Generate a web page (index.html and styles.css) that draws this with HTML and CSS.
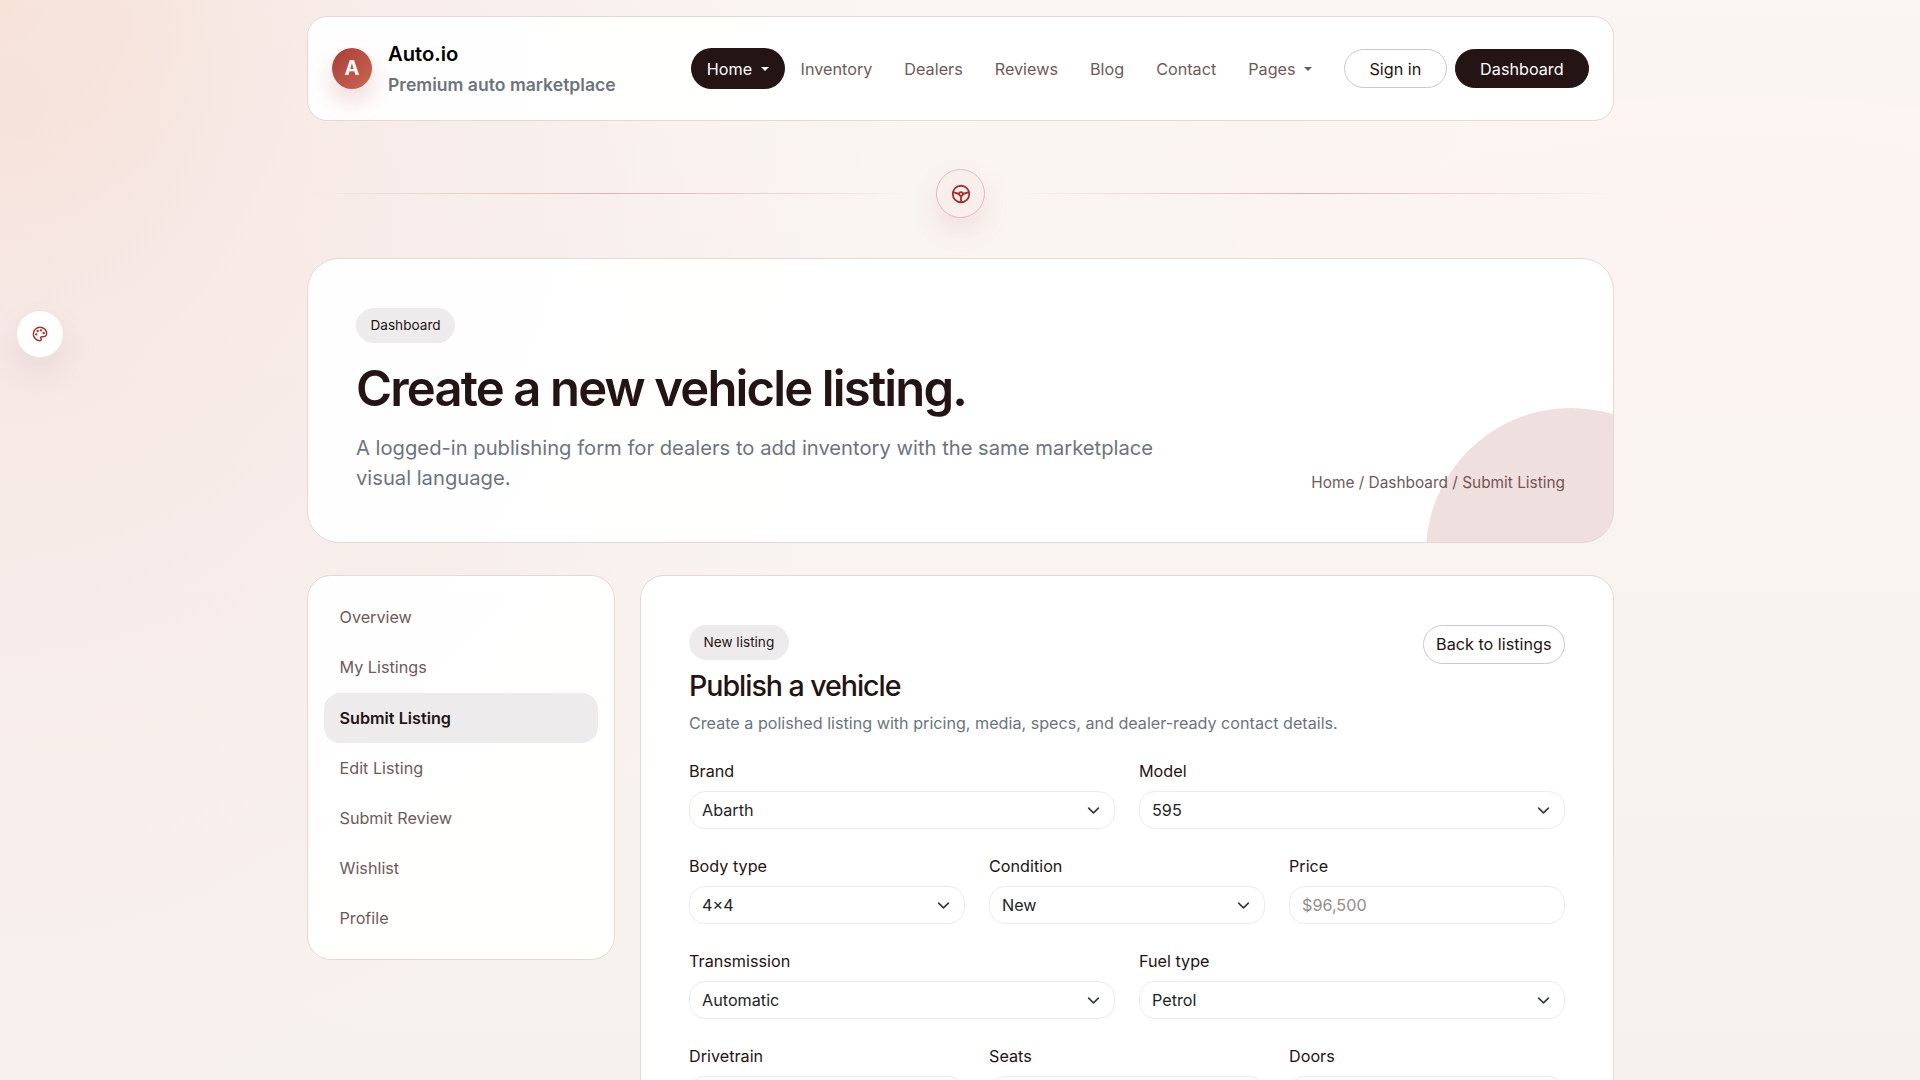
FILE: index.html
```html
<!DOCTYPE html>
<html lang="en">
<head>
  <meta charset="UTF-8" />
  <meta name="viewport" content="width=device-width, initial-scale=1.0"/>
  <title>Submit Listing - Auto.io</title>
  <link rel="stylesheet" href="styles.css">
</head>
<body>

  <!-- Shared icon -->
  <svg class="sprite" aria-hidden="true">
    <symbol id="chevron" viewBox="0 0 16 16">
      <path d="m2 5 6 6 6-6" fill="none" stroke="#343a40" stroke-width="2" stroke-linecap="round" stroke-linejoin="round"/>
    </symbol>
  </svg>

  <button class="theme-toggle" aria-label="Theme colors">
    <svg width="16" height="16" viewBox="0 0 24 24" fill="none" stroke="currentColor" stroke-width="2.2" stroke-linecap="round" stroke-linejoin="round">
      <path d="M12 22a1 1 0 0 1 0-20 10 9 0 0 1 10 9 5 5 0 0 1-5 5h-2.25a1.75 1.75 0 0 0-1.4 2.8l.3.4a1.75 1.75 0 0 1-1.4 2.8z"/>
      <circle cx="13.5" cy="6.5" r=".7" fill="currentColor"/>
      <circle cx="17.5" cy="10.5" r=".7" fill="currentColor"/>
      <circle cx="6.5" cy="12.5" r=".7" fill="currentColor"/>
      <circle cx="8.5" cy="7.5" r=".7" fill="currentColor"/>
    </svg>
  </button>

  <div class="container">
    <header class="navbar">
      <a class="brand" href="#">
        <span class="brand-mark">A</span>
        <span class="brand-text">
          <span class="brand-name">Auto.io</span>
          <span class="brand-tagline">Premium auto marketplace</span>
        </span>
      </a>
      <nav class="nav-links">
        <a class="active" href="#">Home <i class="caret"></i></a>
        <a href="#">Inventory</a>
        <a href="#">Dealers</a>
        <a href="#">Reviews</a>
        <a href="#">Blog</a>
        <a href="#">Contact</a>
        <a href="#">Pages <i class="caret"></i></a>
      </nav>
      <div class="nav-actions">
        <a class="btn btn-outline" href="#">Sign in</a>
        <a class="btn btn-dark" href="#">Dashboard</a>
      </div>
    </header>

    <div class="divider">
      <span class="divider-line"></span>
      <span class="divider-icon">
        <svg width="22" height="22" viewBox="0 0 24 24" fill="none" stroke="currentColor" stroke-width="2" stroke-linecap="round" stroke-linejoin="round">
          <circle cx="12" cy="12" r="9"/>
          <circle cx="12" cy="12" r="2"/>
          <path d="M12 14v7M10 12l-6.75-2M14 12l6.75-2"/>
        </svg>
      </span>
      <span class="divider-line"></span>
    </div>

    <section class="hero">
      <div class="hero-text">
        <span class="badge">Dashboard</span>
        <h1>Create a new vehicle listing.</h1>
        <p>A logged-in publishing form for dealers to add inventory with the same marketplace visual language.</p>
      </div>
      <div class="breadcrumb">Home / Dashboard / Submit Listing</div>
    </section>

    <div class="dashboard">
      <aside class="sidebar">
        <a href="#">Overview</a>
        <a href="#">My Listings</a>
        <a class="active" href="#">Submit Listing</a>
        <a href="#">Edit Listing</a>
        <a href="#">Submit Review</a>
        <a href="#">Wishlist</a>
        <a href="#">Profile</a>
      </aside>

      <main class="panel">
        <div class="panel-head">
          <div>
            <span class="badge">New listing</span>
            <h2>Publish a vehicle</h2>
            <p>Create a polished listing with pricing, media, specs, and dealer-ready contact details.</p>
          </div>
          <a class="btn btn-outline btn-back" href="#">Back to listings</a>
        </div>

        <form class="listing-form">
          <div class="field half">
            <label for="brand">Brand</label>
            <div class="select">
              <select id="brand"><option>Abarth</option></select>
              <svg><use href="#chevron"/></svg>
            </div>
          </div>
          <div class="field half">
            <label for="model">Model</label>
            <div class="select">
              <select id="model"><option>595</option></select>
              <svg><use href="#chevron"/></svg>
            </div>
          </div>

          <div class="field">
            <label for="body">Body type</label>
            <div class="select">
              <select id="body"><option>4×4</option></select>
              <svg><use href="#chevron"/></svg>
            </div>
          </div>
          <div class="field">
            <label for="condition">Condition</label>
            <div class="select">
              <select id="condition"><option>New</option></select>
              <svg><use href="#chevron"/></svg>
            </div>
          </div>
          <div class="field">
            <label for="price">Price</label>
            <input type="text" id="price" placeholder="$96,500">
          </div>

          <div class="field half">
            <label for="transmission">Transmission</label>
            <div class="select">
              <select id="transmission"><option>Automatic</option></select>
              <svg><use href="#chevron"/></svg>
            </div>
          </div>
          <div class="field half">
            <label for="fuel">Fuel type</label>
            <div class="select">
              <select id="fuel"><option>Petrol</option></select>
              <svg><use href="#chevron"/></svg>
            </div>
          </div>

          <div class="field">
            <label for="drivetrain">Drivetrain</label>
            <input type="text" id="drivetrain">
          </div>
          <div class="field">
            <label for="seats">Seats</label>
            <input type="text" id="seats">
          </div>
          <div class="field">
            <label for="doors">Doors</label>
            <input type="text" id="doors">
          </div>
        </form>
      </main>
    </div>
  </div>

</body>
</html>
```
FILE: styles.css
```css
* {
  box-sizing: border-box;
}
body {
  margin: 0;
  height: 1080px;
  overflow: hidden;
  font-family: Inter, "Liberation Sans", sans-serif;
  font-size: 16.2px;
  line-height: 24.4px;
  color: #241414;
  background:
    radial-gradient(circle at 0 0, rgba(246, 224, 208, 0.6), transparent 330px),
    radial-gradient(ellipse 900px 1000px at 0 10%, rgba(243, 216, 214, 0.55), transparent),
    radial-gradient(ellipse 1000px 300px at 90% 20%, rgba(255, 242, 241, 0.5), transparent),
    linear-gradient(#faf6f2, #f7f1ed);
}
a {
  color: inherit;
  text-decoration: none;
}
h1, h2, p {
  margin: 0;
}
.sprite {
  position: absolute;
  width: 0;
  height: 0;
}
.container {
  margin: 0 306px 0 307px;
  padding-top: 16px;
}

/* Navbar */
.navbar {
  display: flex;
  align-items: center;
  height: 105px;
  padding: 0 24px;
  background: rgba(255, 255, 255, 0.94);
  border: 1px solid #e7d7d5;
  border-radius: 20px;
}
.brand {
  display: flex;
  align-items: center;
  gap: 16px;
}
.brand-mark {
  display: flex;
  align-items: center;
  justify-content: center;
  width: 40px;
  height: 41px;
  border-radius: 50%;
  background: linear-gradient(135deg, #a83e38, #cb6652);
  box-shadow: 0 12px 24px rgba(168, 62, 56, 0.2);
  color: #fff;
  font-size: 20px;
  font-weight: 700;
}
.brand-text {
  display: flex;
  flex-direction: column;
  font-weight: 600;
}
.brand-name {
  font-size: 20.2px;
  line-height: 31px;
  color: #000;
}
.brand-tagline {
  font-size: 17.6px;
  line-height: 31px;
  color: #6c757d;
}
.nav-links {
  display: flex;
  margin-left: auto;
  color: #6f5a5a;
}
.nav-links a {
  display: flex;
  align-items: center;
  height: 41px;
  padding: 1px 16px 0;
  border-radius: 21px;
}
.nav-links .active {
  background: #241414;
  color: #fff;
}
.caret {
  margin-left: 8.5px;
  border-top: 4px solid currentColor;
  border-left: 4px solid transparent;
  border-right: 4px solid transparent;
}
.nav-actions {
  display: flex;
  gap: 8px;
  margin-left: 16px;
}
.btn {
  display: flex;
  align-items: center;
  justify-content: center;
  height: 39px;
  padding: 1px 24.4px 0;
  border: 1px solid #241414;
  border-radius: 20px;
  white-space: nowrap;
}
.btn-outline {
  background: #fff;
  border-color: #ccc8c8;
}
.btn-dark {
  background: #241414;
  color: #fff;
}

/* Divider */
.divider {
  display: flex;
  align-items: center;
  gap: 24px;
  margin: 48px 0 40px;
}
.divider-line {
  flex: 1;
  height: 1px;
  background: linear-gradient(90deg, transparent, #dcb3b0, transparent);
}
.divider-icon {
  display: flex;
  align-items: center;
  justify-content: center;
  width: 49px;
  height: 49px;
  border: 1px solid #dfbdbd;
  border-radius: 50%;
  background: #f8efed;
  box-shadow: 0 12px 28px rgba(168, 62, 56, 0.12);
  color: #a0332e;
}

/* Hero */
.hero {
  position: relative;
  display: flex;
  justify-content: space-between;
  align-items: flex-end;
  height: 285px;
  padding: 48px;
  overflow: hidden;
  background: rgba(255, 255, 255, 0.94);
  border: 1px solid #e7d7d5;
  border-radius: 32px;
}
.hero::after {
  content: "";
  position: absolute;
  right: -103px;
  bottom: -156px;
  width: 290px;
  height: 290px;
  border-radius: 50%;
  background: rgba(155, 55, 50, 0.16);
}
.hero-text {
  width: 815px;
}
.badge {
  display: inline-flex;
  align-items: center;
  height: 35px;
  padding: 0 14.5px;
  border-radius: 18px;
  background: #eeebec;
  font-size: 13.6px;
}
.hero h1 {
  margin: 17px 0 16px;
  font-size: 49px;
  font-weight: 600;
  line-height: 57px;
  letter-spacing: -1.85px;
}
.hero p {
  font-size: 20.2px;
  line-height: 30.6px;
  color: #6c757d;
}
.breadcrumb {
  font-size: 15.4px;
  line-height: 22.4px;
  color: #6f5a5a;
}

/* Dashboard */
.dashboard {
  display: flex;
  align-items: flex-start;
  gap: 25px;
  margin-top: 32px;
}
.sidebar {
  width: 308px;
  padding: 16.5px 16px 16px;
  background: rgba(255, 255, 255, 0.94);
  border: 1px solid #e7d7d5;
  border-radius: 24px;
}
.sidebar a {
  display: flex;
  align-items: center;
  height: 50.1px;
  padding: 0 15.5px;
  border-radius: 16px;
  color: #6f5a5a;
}
.sidebar .active {
  background: #eeebec;
  color: #241414;
  font-weight: 600;
}
.panel {
  flex: 1;
  padding: 48.5px 48px 48px;
  background: #fff;
  border: 1px solid #e7d7d5;
  border-radius: 24px;
}
.panel-head {
  display: flex;
  justify-content: space-between;
  align-items: flex-start;
}
.panel-head h2 {
  margin: 8px 0;
  font-size: 28.6px;
  font-weight: 500;
  line-height: 35px;
  letter-spacing: -1.05px;
}
.panel-head p {
  font-size: 16.15px;
  color: #6c757d;
}
.btn-back {
  padding: 0 12.5px;
}

/* Form */
.listing-form {
  display: grid;
  grid-template-columns: repeat(6, 1fr);
  gap: 24.5px 24px;
  margin-top: 24px;
}
.field {
  grid-column: span 2;
}
.field.half {
  grid-column: span 3;
}
.field label {
  display: block;
  height: 24.5px;
  margin-bottom: 7.5px;
}
.select {
  position: relative;
}
.select svg {
  position: absolute;
  top: 13px;
  right: 15px;
  width: 13px;
  height: 13px;
  pointer-events: none;
}
.field select,
.field input {
  display: block;
  width: 100%;
  height: 38.4px;
  padding: 0 12px;
  border: 1px solid #eeebeb;
  border-radius: 16px;
  background: #fff;
  color: #212529;
  font: inherit;
  appearance: none;
}
.field input::placeholder {
  color: #968b8b;
}

/* Floating theme button */
.theme-toggle {
  position: fixed;
  top: 310px;
  left: 16px;
  display: flex;
  align-items: center;
  justify-content: center;
  width: 48px;
  height: 48px;
  padding: 0;
  border: 1px solid #eee2df;
  border-radius: 50%;
  background: #fff;
  box-shadow: 0 16px 36px rgba(60, 30, 20, 0.08);
  color: #a0332e;
}
```
